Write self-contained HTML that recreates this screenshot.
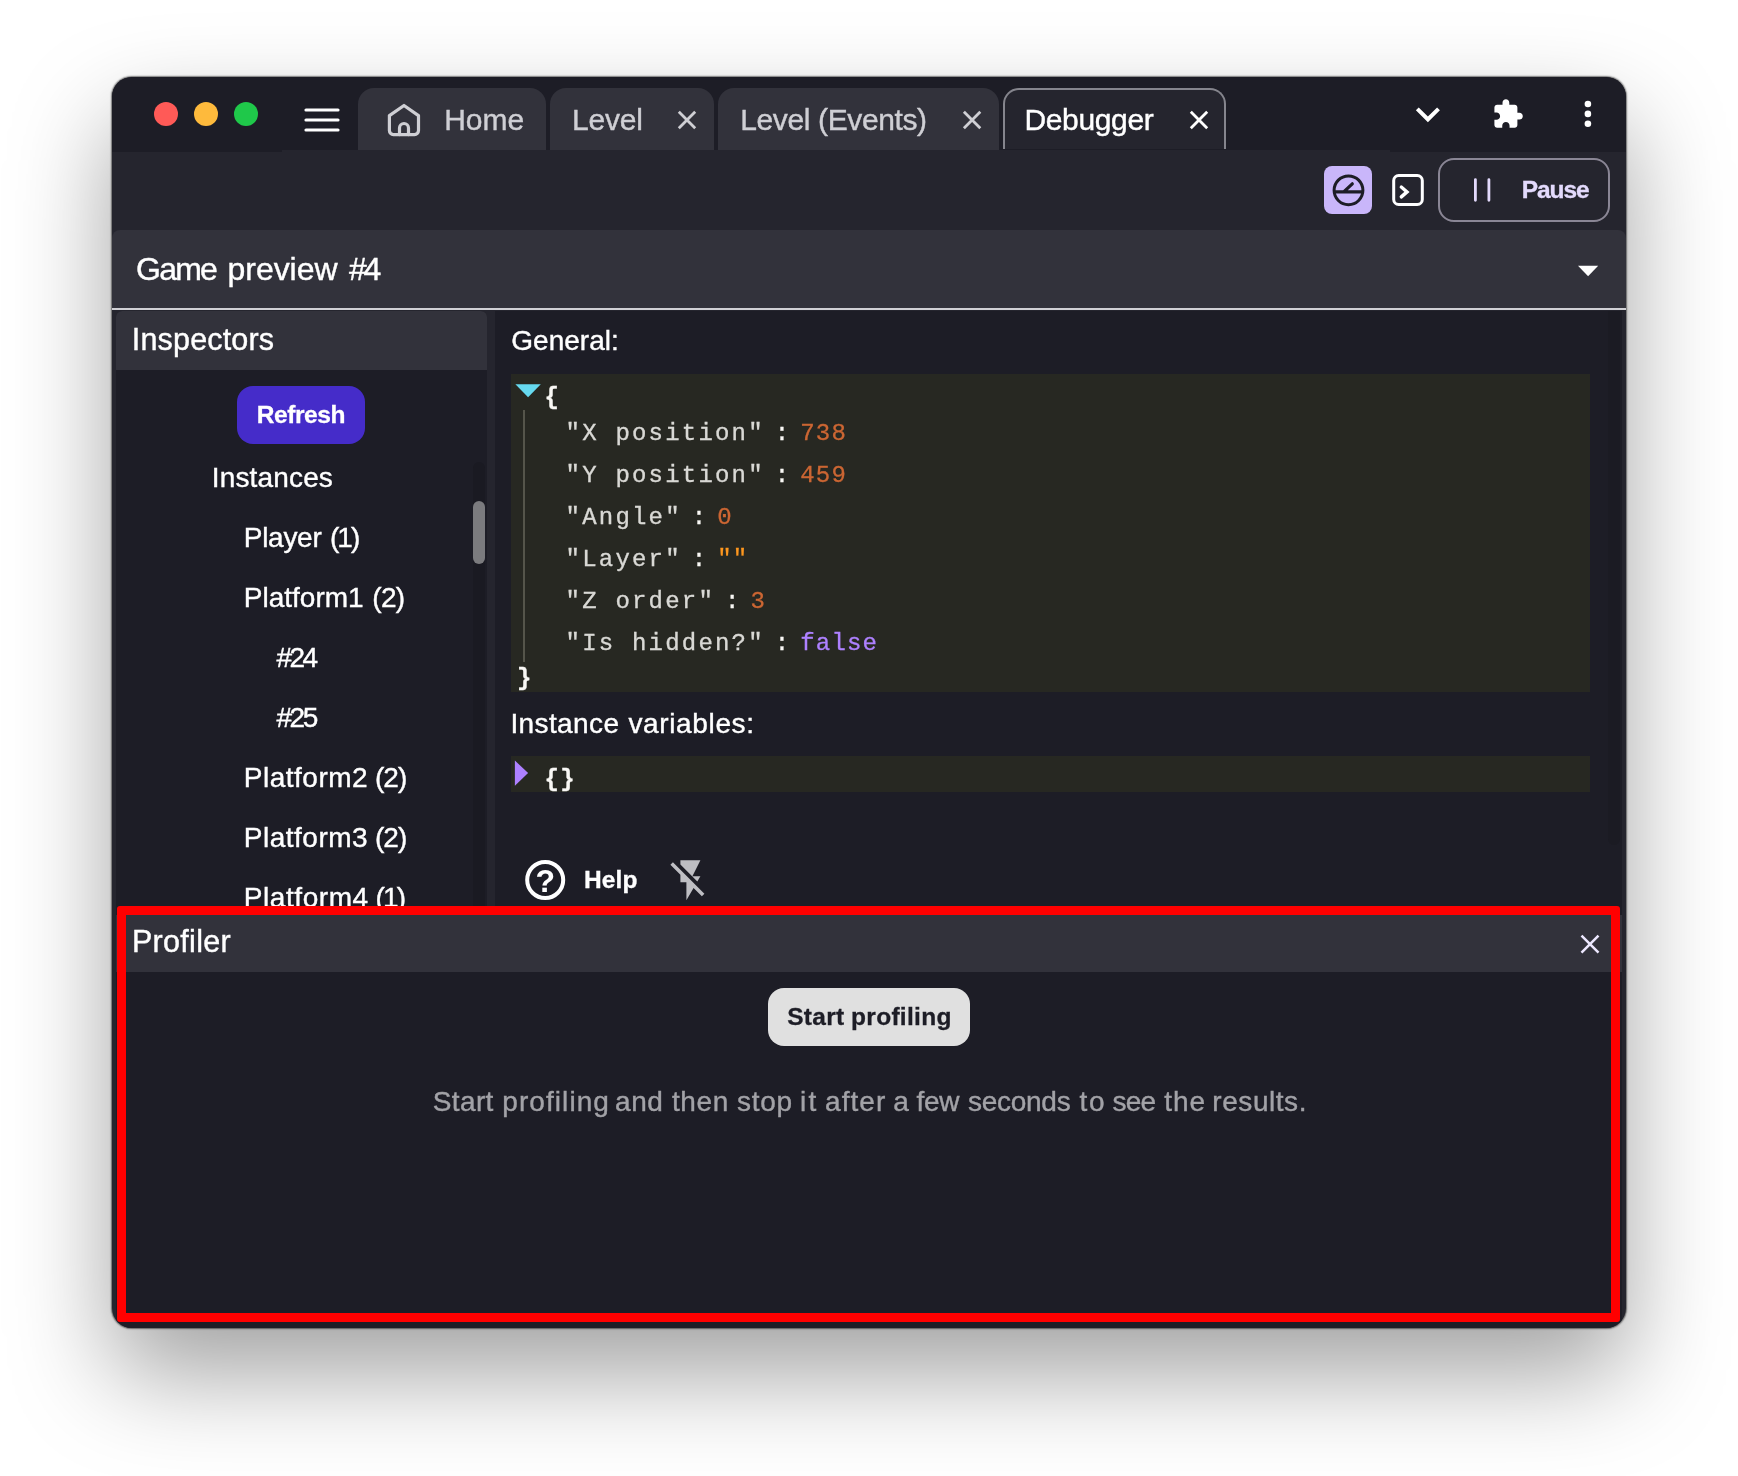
<!DOCTYPE html>
<html lang="en">
<head>
<meta charset="utf-8">
<title>Debugger - Profiler</title>
<style>
html,body{margin:0;padding:0}
body{width:1738px;height:1476px;background:#fff;position:relative;overflow:hidden;font-family:"Liberation Sans",sans-serif}
#win{position:absolute;left:112px;top:77px;width:1514px;height:1250.5px;border-radius:20px;background:#25252E;overflow:hidden;
 box-shadow:0 0 1.5px .5px rgba(0,0,0,.5),0 46px 100px rgba(0,0,0,.37)}
#in{position:absolute;left:-112px;top:-77px;width:1738px;height:1476px;will-change:transform}
.r{position:absolute}
.t{position:absolute;left:0;width:1738px;white-space:pre;font-family:"Liberation Sans",sans-serif;font-weight:400;-webkit-text-stroke:.4px currentColor}
.b{font-weight:700;-webkit-text-stroke:.3px currentColor}
.w{position:absolute;top:0}
.m{position:absolute;white-space:pre;font-family:"Liberation Mono",monospace;font-size:24px;line-height:42px;letter-spacing:1.2px;color:#f9f8f5;-webkit-text-stroke:.3px currentColor}
.k{letter-spacing:2.2px;opacity:.85}
svg{position:absolute;left:0;top:0;overflow:visible}
</style>
</head>
<body>
<div id="win"><div id="in">

<!-- title bar -->
<div class="r" style="left:112px;top:77px;width:1514px;height:74.5px;background:#1D1D26"></div>
<div class="r" style="left:282px;top:149.6px;width:1108px;height:3px;background:#25252E"></div>
<!-- traffic lights -->
<div class="r" style="left:154px;top:102px;width:24px;height:24px;border-radius:50%;background:#FF5A57"></div>
<div class="r" style="left:194px;top:102px;width:24px;height:24px;border-radius:50%;background:#FEBA3C"></div>
<div class="r" style="left:234px;top:102px;width:24px;height:24px;border-radius:50%;background:#1FC84A"></div>

<!-- tabs -->
<div class="r" style="left:358px;top:88px;width:188px;height:62px;background:#32323B;border-radius:16px 16px 0 0"></div>
<div class="r" style="left:550px;top:88px;width:164px;height:62px;background:#32323B;border-radius:16px 16px 0 0"></div>
<div class="r" style="left:718px;top:88px;width:281px;height:62px;background:#32323B;border-radius:16px 16px 0 0"></div>
<div class="r" style="left:1002.8px;top:87.6px;width:219.2px;height:59.7px;background:#25252E;border:2.3px solid #85858D;border-bottom:none;border-radius:16px 16px 0 0"></div>

<!-- game preview header -->
<div class="r" style="left:112px;top:230px;width:1514px;height:79px;background:#32323B;border-radius:8px 8px 0 0"></div>
<div class="r" style="left:112px;top:308px;width:1514px;height:2px;background:#D0D0D5"></div>

<!-- left panel -->
<div class="r" style="left:116px;top:311px;width:371px;height:604px;background:#1D1D26;border-radius:6px 6px 0 0"></div>
<div class="r" style="left:116px;top:311px;width:371px;height:59px;background:#32323B;border-radius:6px 6px 0 0"></div>
<div class="r" style="left:237px;top:386px;width:128px;height:58px;background:#452CC9;border-radius:16px"></div>
<div class="r" style="left:473px;top:462px;width:12px;height:450px;background:#1A1A22;border-radius:6px 6px 0 0"></div>
<div class="r" style="left:472.8px;top:500.7px;width:12.2px;height:63.4px;background:#7B7B7E;border-radius:6.1px"></div>

<!-- right panel -->
<div class="r" style="left:495px;top:311px;width:1127px;height:604px;background:#1D1D26"></div>
<div class="r" style="left:1608px;top:311px;width:12px;height:534px;background:#1B1B23;border-radius:0 0 6px 6px"></div>
<div class="r" style="left:511px;top:374px;width:1079px;height:318px;background:#272822"></div>
<div class="r" style="left:511px;top:755.5px;width:1079px;height:36.5px;background:#272822"></div>
<div class="r" style="left:523.2px;top:410px;width:1.9px;height:252px;background:#55554B"></div>

<!-- code -->
<span class="m" style="left:544.6px;top:377.0px;font-weight:700">{</span>
<span class="m" style="left:565.6px;top:412.5px"><span class="k">"X position"</span></span>
<span class="m" style="left:565.6px;top:454.5px"><span class="k">"Y position"</span></span>
<span class="m" style="left:565.6px;top:496.5px"><span class="k">"Angle"</span></span>
<span class="m" style="left:565.6px;top:538.5px"><span class="k">"Layer"</span></span>
<span class="m" style="left:565.6px;top:580.5px"><span class="k">"Z order"</span></span>
<span class="m" style="left:565.6px;top:622.5px"><span class="k">"Is hidden?"</span></span>
<span class="m" style="left:774.8px;top:412.5px">:</span><span class="m" style="left:800.2px;top:412.5px;color:#CC6633">738</span>
<span class="m" style="left:774.8px;top:454.5px">:</span><span class="m" style="left:800.2px;top:454.5px;color:#CC6633">459</span>
<span class="m" style="left:691.8px;top:496.5px">:</span><span class="m" style="left:717.2px;top:496.5px;color:#CC6633">0</span>
<span class="m" style="left:691.8px;top:538.5px">:</span><span class="m" style="left:717.2px;top:538.5px;color:#FD971F">""</span>
<span class="m" style="left:725.0px;top:580.5px">:</span><span class="m" style="left:750.4px;top:580.5px;color:#CC6633">3</span>
<span class="m" style="left:774.8px;top:622.5px">:</span><span class="m" style="left:800.2px;top:622.5px;color:#AE81FF">false</span>
<span class="m" style="left:517.0px;top:658.0px;font-weight:700">}</span>
<span class="m" style="left:544.6px;top:759.0px;font-weight:700">{}</span>

<!-- profiler panel -->
<div class="r" style="left:116px;top:915px;width:1506px;height:416px;background:#1D1D26"></div>
<div class="r" style="left:116px;top:915px;width:1506px;height:57px;background:#32323B"></div>
<div class="r" style="left:768px;top:988px;width:202px;height:58px;background:#E0E0E0;border-radius:16px"></div>

<!-- toolbar buttons -->
<div class="r" style="left:1324px;top:166px;width:48px;height:48px;background:#C9B6FA;border-radius:8px"></div>
<div class="r" style="left:1438.3px;top:158px;width:167.3px;height:59.8px;border:2px solid #8A8695;border-radius:16px"></div>

<div class="t" style="top:101.00px;font-size:30px;line-height:37px;color:#CFCFD4"><span class="w" style="left:444.16px;letter-spacing:-0.022px">Home</span></div>
<div class="t" style="top:101.00px;font-size:30px;line-height:37px;color:#CFCFD4"><span class="w" style="left:572.06px;letter-spacing:-0.199px">Level</span></div>
<div class="t" style="top:101.00px;font-size:30px;line-height:37px;color:#CFCFD4"><span class="w" style="left:740.16px;letter-spacing:-0.374px">Level</span> <span class="w" style="left:818.09px;letter-spacing:-0.391px">(Events)</span></div>
<div class="t" style="top:101.00px;font-size:30px;line-height:37px;color:#FFFFFF"><span class="w" style="left:1024.46px;letter-spacing:-0.353px">Debugger</span></div>
<div class="t" style="top:249.00px;font-size:32px;line-height:40px;color:#FFFFFF"><span class="w" style="left:136.10px;letter-spacing:-1.815px">Game</span> <span class="w" style="left:227.60px;letter-spacing:-0.059px">preview</span> <span class="w" style="left:348.90px;letter-spacing:-3.297px">#4</span></div>
<div class="t" style="top:320.00px;font-size:30.5px;line-height:38px;color:#FFFFFF"><span class="w" style="left:131.82px;letter-spacing:0.170px">Inspectors</span></div>
<div class="t" style="top:922.00px;font-size:30.5px;line-height:38px;color:#FFFFFF"><span class="w" style="left:131.92px;letter-spacing:0.318px">Profiler</span></div>
<div class="t" style="top:323.00px;font-size:28px;line-height:35px;color:#FFFFFF"><span class="w" style="left:511.29px;letter-spacing:0.007px">General:</span></div>
<div class="t" style="top:706.00px;font-size:28px;line-height:35px;color:#FFFFFF"><span class="w" style="left:510.41px;letter-spacing:0.396px">Instance</span> <span class="w" style="left:628.40px;letter-spacing:0.644px">variables:</span></div>
<div class="t" style="top:460.00px;font-size:28px;line-height:35px;color:#FFFFFF"><span class="w" style="left:211.71px;letter-spacing:0.164px">Instances</span></div>
<div class="t" style="top:520.00px;font-size:28px;line-height:35px;color:#FFFFFF"><span class="w" style="left:243.81px;letter-spacing:-0.288px">Player</span> <span class="w" style="left:329.89px;letter-spacing:-1.829px">(1)</span></div>
<div class="t" style="top:580.00px;font-size:28px;line-height:35px;color:#FFFFFF"><span class="w" style="left:243.81px;letter-spacing:0.000px">Platform1</span> <span class="w" style="left:372.29px;letter-spacing:-0.729px">(2)</span></div>
<div class="t" style="top:640.00px;font-size:28px;line-height:35px;color:#FFFFFF"><span class="w" style="left:276.50px;letter-spacing:-2.510px">#24</span></div>
<div class="t" style="top:700.00px;font-size:28px;line-height:35px;color:#FFFFFF"><span class="w" style="left:276.50px;letter-spacing:-2.491px">#25</span></div>
<div class="t" style="top:760.00px;font-size:28px;line-height:35px;color:#FFFFFF"><span class="w" style="left:243.81px;letter-spacing:0.500px">Platform2</span> <span class="w" style="left:374.89px;letter-spacing:-0.829px">(2)</span></div>
<div class="t" style="top:820.00px;font-size:28px;line-height:35px;color:#FFFFFF"><span class="w" style="left:243.81px;letter-spacing:0.500px">Platform3</span> <span class="w" style="left:374.89px;letter-spacing:-0.829px">(2)</span></div>
<div class="t" style="top:880.00px;font-size:28px;line-height:35px;color:#FFFFFF"><span class="w" style="left:243.81px;letter-spacing:0.571px">Platform4</span> <span class="w" style="left:375.49px;letter-spacing:-1.829px">(1)</span></div>
<div class="t b" style="top:399.00px;font-size:24.5px;line-height:31px;color:#FFFFFF"><span class="w" style="left:256.75px;letter-spacing:-0.427px">Refresh</span></div>
<div class="t b" style="top:174.00px;font-size:24.5px;line-height:31px;color:#E3DAFC"><span class="w" style="left:1521.75px;letter-spacing:-1.090px">Pause</span></div>
<div class="t b" style="top:864.00px;font-size:24.5px;line-height:31px;color:#FFFFFF"><span class="w" style="left:584.05px;letter-spacing:0.091px">Help</span></div>
<div class="t b" style="top:1001.00px;font-size:24.5px;line-height:31px;color:#1D1D26"><span class="w" style="left:787.25px;letter-spacing:0.260px">Start</span> <span class="w" style="left:851.05px;letter-spacing:0.299px">profiling</span></div>
<div class="t" style="top:1084.00px;font-size:28px;line-height:35px;color:#A2A2A7"><span class="w" style="left:432.82px;letter-spacing:0.362px">Start</span> <span class="w" style="left:502.35px;letter-spacing:1.058px">profiling</span> <span class="w" style="left:615.03px;letter-spacing:0.565px">and</span> <span class="w" style="left:671.90px;letter-spacing:0.659px">then</span> <span class="w" style="left:736.96px;letter-spacing:0.749px">stop</span> <span class="w" style="left:800.05px;letter-spacing:2.354px">it</span> <span class="w" style="left:825.03px;letter-spacing:1.046px">after</span> <span class="w" style="left:893.23px;letter-spacing:0.000px">a</span> <span class="w" style="left:916.60px;letter-spacing:-0.307px">few</span> <span class="w" style="left:967.96px;letter-spacing:-0.263px">seconds</span> <span class="w" style="left:1079.40px;letter-spacing:1.883px">to</span> <span class="w" style="left:1112.56px;letter-spacing:-0.786px">see</span> <span class="w" style="left:1164.20px;letter-spacing:0.955px">the</span> <span class="w" style="left:1212.35px;letter-spacing:0.547px">results.</span></div>

<svg width="1738" height="1476" viewBox="0 0 1738 1476" fill="none">
 <!-- hamburger -->
 <g stroke="#FFFFFF" stroke-width="3.2" stroke-linecap="round">
  <path d="M306 110H338M306 120H338M306 130H338"/>
 </g>
 <!-- home -->
 <g stroke="#CFCFD4" stroke-width="3.2" stroke-linejoin="round" stroke-linecap="round">
  <path d="M404 105.5L389.4 115.6V130.6a4 4 0 0 0 4 4H414.5a4 4 0 0 0 4-4V115.6Z"/>
  <path d="M399.5 134.6V128a4.5 4.5 0 0 1 9 0V134.6"/>
 </g>
 <!-- tab close -->
 <g stroke="#CFCFD4" stroke-width="2.8">
  <path d="M678.8 111.8L695.2 128.2M695.2 111.8L678.8 128.2"/>
  <path d="M963.9 111.8L980.3 128.2M980.3 111.8L963.9 128.2"/>
 </g>
 <path stroke="#FFFFFF" stroke-width="2.8" d="M1190.8 111.8L1207.2 128.2M1207.2 111.8L1190.8 128.2"/>
 <!-- chevron -->
 <g transform="translate(1403.9 90.2) scale(2)"><path fill="#FFFFFF" d="M16.59 8.59 12 13.17 7.41 8.59 6 10l6 6 6-6z"/></g>
 <!-- puzzle -->
 <g transform="translate(1491.7 97.95) scale(1.352)"><path fill="#FFFFFF" d="M20.5 11H19V7c0-1.1-.9-2-2-2h-4V3.5C13 2.12 11.88 1 10.5 1S8 2.12 8 3.5V5H4c-1.1 0-1.99.9-1.99 2v3.8H3.5c1.49 0 2.7 1.21 2.7 2.7s-1.21 2.7-2.7 2.7H2V20c0 1.1.9 2 2 2h3.8v-1.5c0-1.49 1.21-2.7 2.7-2.7 1.49 0 2.7 1.21 2.7 2.7V22H17c1.1 0 2-.9 2-2v-4h1.5c1.38 0 2.5-1.12 2.5-2.5S21.88 11 20.5 11z"/></g>
 <!-- dots -->
 <g fill="#FFFFFF"><circle cx="1587.9" cy="104" r="3.3"/><circle cx="1587.9" cy="113.9" r="3.3"/><circle cx="1587.9" cy="123.8" r="3.3"/></g>
 <!-- profiler icon -->
 <g stroke="#1D1D26" stroke-width="3" stroke-linecap="round">
  <circle cx="1348.5" cy="190.3" r="14.4"/>
  <path d="M1335 191.9H1362M1343.7 191.9L1352.3 183.8" stroke-width="3.2"/>
 </g>
 <!-- console icon -->
 <rect x="1393.7" y="175.5" width="28.6" height="29" rx="5" stroke="#FFFFFF" stroke-width="3"/>
 <path d="M1401.3 187L1407 191.9L1401.3 196.9" stroke="#FFFFFF" stroke-width="3.4" stroke-linecap="round" stroke-linejoin="miter"/>
 <!-- pause -->
 <path d="M1475.4 179.6V200.3M1488.9 179.6V200.3" stroke="#E3DAFC" stroke-width="2.8" stroke-linecap="round"/>
 <!-- game preview triangle -->
 <path d="M1578 265.8H1598.2L1588.1 276.3Z" fill="#FFFFFF"/>
 <!-- json arrows -->
 <path d="M515.4 384.2H540.8L528.1 397.3Z" fill="#66D9EF"/>
 <path d="M514.9 760.5V785.8L528.1 773.1Z" fill="#AE81FF"/>
 <!-- profiler close -->
 <path stroke="#EDE8FF" stroke-width="2.5" d="M1581.5 935.6L1598.5 952.6M1598.5 935.6L1581.5 952.6"/>
 <!-- help -->
 <circle cx="545.2" cy="880" r="18" stroke="#FFFFFF" stroke-width="4"/>
 <!-- flash off -->
 <g transform="translate(666.4 856.2) scale(2)"><path fill="#BEBEC3" d="M3.27 3L2 4.27l5 5V13h3v9l3.58-6.14L17.73 20 19 18.73 3.27 3zM17 10h-4l4-8H7v2.18l8.46 8.46L17 10z"/></g>
</svg>
<div class="t b" style="top:860.5px;font-size:32px;line-height:40px;color:#fff;-webkit-text-stroke:0"><span class="w" style="left:535.6px">?</span></div>

<!-- red highlight -->
<div class="r" style="left:116.8px;top:905.8px;width:1484.8px;height:398.3px;border:9.3px solid #FF0000;border-radius:3px"></div>

</div></div>
</body>
</html>
